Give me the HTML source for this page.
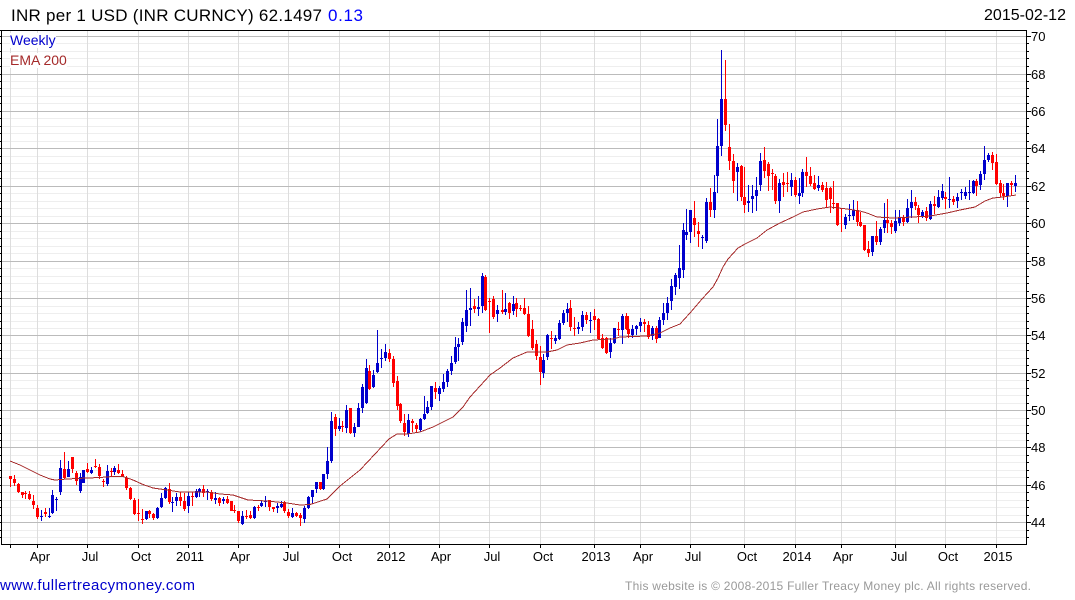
<!DOCTYPE html>
<html lang="en">
<head>
<meta charset="utf-8">
<title>INR per 1 USD</title>
<style>
html,body{margin:0;padding:0;background:#fff;width:1075px;height:600px;overflow:hidden}
svg{display:block}
text{font-family:"Liberation Sans",Arial,sans-serif}
</style>
</head>
<body>
<svg xmlns="http://www.w3.org/2000/svg" width="1075" height="600" viewBox="0 0 1075 600">
<g shape-rendering="crispEdges" fill="none">
<path stroke="#eeeeee" d="M1 43.5H1026M1 51.5H1026M1 58.5H1026M1 66.5H1026M1 81.5H1026M1 88.5H1026M1 96.5H1026M1 103.5H1026M1 118.5H1026M1 126.5H1026M1 133.5H1026M1 141.5H1026M1 156.5H1026M1 163.5H1026M1 171.5H1026M1 178.5H1026M1 193.5H1026M1 201.5H1026M1 208.5H1026M1 216.5H1026M1 231.5H1026M1 238.5H1026M1 246.5H1026M1 253.5H1026M1 268.5H1026M1 276.5H1026M1 283.5H1026M1 291.5H1026M1 306.5H1026M1 313.5H1026M1 321.5H1026M1 328.5H1026M1 343.5H1026M1 350.5H1026M1 358.5H1026M1 365.5H1026M1 380.5H1026M1 388.5H1026M1 395.5H1026M1 403.5H1026M1 418.5H1026M1 425.5H1026M1 433.5H1026M1 440.5H1026M1 455.5H1026M1 462.5H1026M1 470.5H1026M1 477.5H1026M1 492.5H1026M1 500.5H1026M1 507.5H1026M1 515.5H1026M1 530.5H1026M1 537.5H1026"/>
<path stroke="#dddddd" d="M10.5 31V544M37.5 31V544M87.5 31V544M138.5 31V544M188.5 31V544M238.5 31V544M288.5 31V544M339.5 31V544M389.5 31V544M439.5 31V544M489.5 31V544M540.5 31V544M594.5 31V544M640.5 31V544M690.5 31V544M744.5 31V544M795.5 31V544M841.5 31V544M895.5 31V544M945.5 31V544M996.5 31V544"/>
<path stroke="#bbbbbb" d="M1 36.5H1026M1 74.5H1026M1 111.5H1026M1 148.5H1026M1 186.5H1026M1 223.5H1026M1 261.5H1026M1 298.5H1026M1 335.5H1026M1 373.5H1026M1 410.5H1026M1 447.5H1026M1 485.5H1026M1 522.5H1026"/>
<rect x="10" y="33" width="46" height="15" fill="#fff"/>
<rect x="10" y="53" width="57" height="15" fill="#fff"/>

<path stroke="#ff0000" stroke-width="1" d="M10.5 476V487M14.5 475V486M18.5 483V493M22.5 492V498M25.5 491V499M29.5 491V500M33.5 495V509M37.5 505V519M45.5 508V517M64.5 452V479M72.5 457V473M76.5 471V485M87.5 463V473M95.5 459V468M99.5 464V479M103.5 479V487M111.5 468V476M118.5 464V474M122.5 470V477M126.5 476V490M130.5 487V500M134.5 498V515M138.5 499V521M142.5 509V524M149.5 510V518M153.5 513V520M169.5 483V504M180.5 492V506M184.5 493V511M192.5 492V506M203.5 485V497M211.5 490V501M219.5 497V506M227.5 496V504M231.5 501V511M234.5 505V513M238.5 511V523M246.5 510V519M250.5 511V519M258.5 505V511M269.5 500V511M273.5 507V512M284.5 501V513M288.5 509V518M296.5 512V517M300.5 513V526M320.5 482V490M335.5 414V436M342.5 421V432M350.5 408V434M369.5 365V390M389.5 349V362M393.5 356V387M397.5 376V410M400.5 403V423M404.5 414V436M412.5 419V432M416.5 423V432M435.5 382V399M474.5 299V313M485.5 275V311M489.5 298V333M493.5 296V319M502.5 290V314M509.5 302V319M516.5 298V317M520.5 305V311M524.5 298V315M528.5 306V337M532.5 320V350M536.5 340V360M540.5 346V385M551.5 331V349M570.5 300V331M574.5 317V336M586.5 312V324M594.5 309V330M598.5 318V340M602.5 334V349M606.5 337V354M618.5 322V336M626.5 313V330M628.5 316V338M644.5 319V332M648.5 321V339M656.5 326V343M694.5 201V237M698.5 222V247M710.5 188V217M725.5 60V131M729.5 124V170M733.5 154V193M741.5 165V201M744.5 167V213M764.5 147V178M768.5 162V191M772.5 169V190M775.5 174V204M783.5 173V197M787.5 172V192M795.5 177V197M806.5 157V187M810.5 167V186M814.5 175V190M822.5 182V192M826.5 182V208M830.5 187V213M833.5 181V209M837.5 203V226M841.5 208V232M857.5 201V226M860.5 212V227M864.5 225V251M868.5 241V257M876.5 221V245M887.5 199V233M891.5 220V234M903.5 215V226M915.5 197V210M918.5 205V223M926.5 207V221M934.5 196V214M945.5 192V209M953.5 196V205M976.5 179V196M992.5 152V170M996.5 154V185M1000.5 180V197M1003.5 184V200M1011.5 181V195"/>
<path stroke="#ff0000" stroke-width="3" d="M10.5 476V479M14.5 479V483M18.5 484V492M22.5 492V495M25.5 493V494M29.5 494V499M33.5 501V505M37.5 508V517M45.5 512V514M64.5 469V478M72.5 457V469M76.5 473V481M87.5 469V472M95.5 466V467M99.5 467V476M103.5 481V482M111.5 471V472M118.5 470V473M122.5 474V477M126.5 478V488M130.5 488V499M134.5 500V514M138.5 513V514M142.5 519V520M149.5 511V514M153.5 514V518M169.5 489V502M180.5 497V501M184.5 501V509M192.5 496V497M203.5 489V493M211.5 492V499M219.5 498V503M227.5 499V503M231.5 501V511M234.5 510V511M238.5 511V521M246.5 516V517M250.5 515V518M258.5 507V508M269.5 500V507M273.5 507V509M284.5 502V511M288.5 512V516M296.5 513V516M300.5 515V518M320.5 482V489M335.5 417V429M342.5 426V427M350.5 408V433M369.5 371V389M389.5 353V359M393.5 359V383M397.5 381V406M400.5 404V421M404.5 423V432M412.5 421V423M416.5 425V429M435.5 388V392M474.5 306V309M485.5 277V310M489.5 301V302M493.5 299V317M502.5 310V312M509.5 303V313M516.5 303V309M520.5 308V309M524.5 308V314M528.5 314V336M532.5 329V348M536.5 344V356M540.5 357V372M551.5 338V339M570.5 308V327M574.5 328V329M586.5 315V320M594.5 316V320M598.5 319V339M602.5 338V348M606.5 338V353M618.5 329V330M626.5 316V329M628.5 329V334M644.5 322V324M648.5 325V337M656.5 328V339M694.5 218V225M698.5 231V234M710.5 202V210M725.5 99V125M729.5 147V161M733.5 161V181M741.5 166V197M744.5 197V205M764.5 160V171M768.5 164V176M772.5 173V174M775.5 176V201M783.5 182V185M787.5 183V184M795.5 180V195M806.5 172V176M810.5 176V184M814.5 183V189M822.5 185V190M826.5 188V200M830.5 188V199M833.5 203V204M837.5 203V225M841.5 208V209M857.5 210V222M860.5 222V226M864.5 225V250M868.5 249V253M876.5 236V242M887.5 220V223M891.5 223V227M903.5 218V222M915.5 202V206M918.5 208V215M926.5 211V218M934.5 204V206M945.5 197V199M953.5 199V202M976.5 181V186M992.5 155V163M996.5 162V184M1000.5 183V193M1003.5 193V196M1011.5 183V185"/>
<path stroke="#0000cc" stroke-width="1" d="M41.5 510V521M49.5 508V518M52.5 490V514M56.5 497V511M60.5 460V495M68.5 461V477M80.5 473V493M83.5 470V483M91.5 467V474M107.5 465V486M114.5 466V475M146.5 511V520M157.5 507V519M161.5 493V508M165.5 487V499M172.5 497V512M176.5 493V506M188.5 492V513M196.5 489V498M199.5 488V497M207.5 489V500M215.5 492V504M223.5 497V504M242.5 511V525M254.5 506V519M261.5 501V507M265.5 496V507M277.5 503V513M281.5 501V508M292.5 508V518M304.5 506V523M308.5 496V509M312.5 490V503M316.5 482V493M323.5 474V490M327.5 447V479M331.5 412V463M339.5 418V431M346.5 405V433M354.5 423V437M358.5 403V427M362.5 384V413M366.5 359V404M373.5 370V388M377.5 330V373M381.5 349V368M385.5 344V361M408.5 414V437M420.5 418V432M424.5 396V420M427.5 401V414M431.5 386V410M439.5 386V401M443.5 374V392M447.5 369V387M451.5 356V375M455.5 337V364M458.5 338V361M462.5 318V345M466.5 290V332M470.5 288V326M478.5 296V316M482.5 273V313M497.5 305V322M505.5 293V315M513.5 296V315M543.5 354V378M547.5 334V360M555.5 335V344M559.5 320V340M563.5 310V325M567.5 303V322M578.5 322V334M582.5 311V331M590.5 312V333M610.5 338V358M614.5 328V344M622.5 314V344M632.5 325V338M636.5 325V335M640.5 318V332M652.5 326V340M659.5 317V338M663.5 303V325M667.5 297V320M671.5 279V310M675.5 273V295M679.5 245V289M683.5 223V278M686.5 209V240M690.5 210V243M702.5 235V249M706.5 198V243M714.5 175V218M717.5 119V193M721.5 50V156M737.5 163V201M748.5 185V212M752.5 185V213M756.5 177V211M760.5 153V191M779.5 179V213M791.5 173V196M799.5 178V204M802.5 169V197M818.5 176V191M845.5 214V229M849.5 204V221M853.5 200V220M872.5 236V256M880.5 227V245M884.5 203V233M895.5 210V233M899.5 210V226M907.5 199V223M911.5 190V218M922.5 210V218M930.5 201V220M938.5 190V208M942.5 184V200M949.5 177V208M957.5 193V208M961.5 189V200M965.5 187V199M969.5 180V200M973.5 180V194M980.5 171V190M984.5 146V180M988.5 153V162M1007.5 183V207M1015.5 175V192"/>
<path stroke="#0000cc" stroke-width="3" d="M41.5 516V517M49.5 516V517M52.5 495V513M56.5 499V500M60.5 468V492M68.5 469V477M80.5 477V491M83.5 470V483M91.5 470V473M107.5 471V484M114.5 468V472M146.5 511V519M157.5 508V518M161.5 498V507M165.5 488V498M172.5 502V503M176.5 497V501M188.5 496V506M196.5 491V497M199.5 489V492M207.5 491V492M215.5 498V500M223.5 499V501M242.5 516V524M254.5 507V518M261.5 503V506M265.5 501V502M277.5 506V508M281.5 504V507M292.5 513V517M304.5 508V519M308.5 497V508M312.5 490V497M316.5 482V489M323.5 474V489M327.5 461V474M331.5 421V461M339.5 426V429M346.5 410V428M354.5 427V433M358.5 408V427M362.5 387V408M366.5 368V403M373.5 375V387M377.5 363V372M381.5 358V359M385.5 352V358M408.5 420V434M420.5 419V430M424.5 414V419M427.5 407V413M431.5 386V407M439.5 388V394M443.5 382V389M447.5 371V382M451.5 363V371M455.5 347V362M458.5 344V347M462.5 322V342M466.5 310V326M470.5 308V310M478.5 307V309M482.5 276V306M497.5 310V314M505.5 309V312M513.5 304V311M543.5 360V373M547.5 335V357M555.5 338V341M559.5 323V339M563.5 313V323M567.5 309V313M578.5 327V329M582.5 315V327M590.5 320V321M610.5 343V352M614.5 328V343M622.5 316V330M632.5 329V335M636.5 326V329M640.5 322V326M652.5 328V336M659.5 320V338M663.5 313V320M667.5 303V313M671.5 286V301M675.5 275V287M679.5 268V278M683.5 230V270M686.5 232V235M690.5 210V232M702.5 237V238M706.5 202V241M714.5 192V210M717.5 146V176M721.5 99V146M737.5 167V172M748.5 201V203M752.5 196V199M756.5 190V196M760.5 161V185M779.5 183V201M791.5 180V187M799.5 193V196M802.5 172V193M818.5 185V188M845.5 217V225M849.5 215V216M853.5 210V216M872.5 236V252M880.5 229V242M884.5 220V228M895.5 221V231M899.5 217V223M907.5 208V222M911.5 202V208M922.5 212V216M930.5 204V219M938.5 197V207M942.5 191V198M949.5 199V200M957.5 197V201M961.5 192V193M965.5 192V196M969.5 192V193M973.5 181V193M980.5 174V185M984.5 160V174M988.5 155V160M1007.5 183V196M1015.5 183V186"/>

<polyline stroke="#a52a2a" stroke-width="1" points="10,461 20,465 30,470 40,475 50,479 55,480 67,479 87,478 100,477.5 113,476.5 123,476.5 133,480 143,484.5 153,488 167,490 180,492 207,492 220,494 233,495 248,500 267,501 287,503 300,505 310,504.5 327,499 340,486 350,478 360,470 375,454 389,439 397,434 407,434 420,432 433,427 447,420 453,417 463,407 470,397 480,386 490,375 500,368 513,358 527,352 547,352 557,350 567,345 580,343 593,340 613,339 620,337 647,336 660,333 670,328 680,324 690,313 702,299 713,287 718,278 723,267 728,259 738,248 745,244 757,238 767,230 780,223 793,217 803,212 817,209 830,207 847,209 860,211 867,213 877,217 893,218 913,217 930,216 947,213 960,210 975,207 985,201 993,198 1003,197 1016,195"/>

<path stroke="#000" d="M0 30.5H1027M1.5 30V545M1026.5 30V545M1 544.5H1027"/>
<path stroke="#000" d="M0 36.5H2M0 43.5H2M0 51.5H2M0 58.5H2M0 66.5H2M0 74.5H2M0 81.5H2M0 88.5H2M0 96.5H2M0 103.5H2M0 111.5H2M0 118.5H2M0 126.5H2M0 133.5H2M0 141.5H2M0 148.5H2M0 156.5H2M0 163.5H2M0 171.5H2M0 178.5H2M0 186.5H2M0 193.5H2M0 201.5H2M0 208.5H2M0 216.5H2M0 223.5H2M0 231.5H2M0 238.5H2M0 246.5H2M0 253.5H2M0 261.5H2M0 268.5H2M0 276.5H2M0 283.5H2M0 291.5H2M0 298.5H2M0 306.5H2M0 313.5H2M0 321.5H2M0 328.5H2M0 335.5H2M0 343.5H2M0 350.5H2M0 358.5H2M0 365.5H2M0 373.5H2M0 380.5H2M0 388.5H2M0 395.5H2M0 403.5H2M0 410.5H2M0 418.5H2M0 425.5H2M0 433.5H2M0 440.5H2M0 447.5H2M0 455.5H2M0 462.5H2M0 470.5H2M0 477.5H2M0 485.5H2M0 492.5H2M0 500.5H2M0 507.5H2M0 515.5H2M0 522.5H2M0 530.5H2M0 537.5H2"/>
<path stroke="#000" d="M1026 36.5H1031M1026 74.5H1031M1026 111.5H1031M1026 148.5H1031M1026 186.5H1031M1026 223.5H1031M1026 261.5H1031M1026 298.5H1031M1026 335.5H1031M1026 373.5H1031M1026 410.5H1031M1026 447.5H1031M1026 485.5H1031M1026 522.5H1031M1026 43.5H1029M1026 51.5H1029M1026 58.5H1029M1026 66.5H1029M1026 81.5H1029M1026 88.5H1029M1026 96.5H1029M1026 103.5H1029M1026 118.5H1029M1026 126.5H1029M1026 133.5H1029M1026 141.5H1029M1026 156.5H1029M1026 163.5H1029M1026 171.5H1029M1026 178.5H1029M1026 193.5H1029M1026 201.5H1029M1026 208.5H1029M1026 216.5H1029M1026 231.5H1029M1026 238.5H1029M1026 246.5H1029M1026 253.5H1029M1026 268.5H1029M1026 276.5H1029M1026 283.5H1029M1026 291.5H1029M1026 306.5H1029M1026 313.5H1029M1026 321.5H1029M1026 328.5H1029M1026 343.5H1029M1026 350.5H1029M1026 358.5H1029M1026 365.5H1029M1026 380.5H1029M1026 388.5H1029M1026 395.5H1029M1026 403.5H1029M1026 418.5H1029M1026 425.5H1029M1026 433.5H1029M1026 440.5H1029M1026 455.5H1029M1026 462.5H1029M1026 470.5H1029M1026 477.5H1029M1026 492.5H1029M1026 500.5H1029M1026 507.5H1029M1026 515.5H1029M1026 530.5H1029M1026 537.5H1029"/>
<path stroke="#000" d="M10.5 544V548M37.5 544V548M87.5 544V548M138.5 544V548M188.5 544V548M238.5 544V548M288.5 544V548M339.5 544V548M389.5 544V548M439.5 544V548M489.5 544V548M540.5 544V548M594.5 544V548M640.5 544V548M690.5 544V548M744.5 544V548M795.5 544V548M841.5 544V548M895.5 544V548M945.5 544V548M996.5 544V548"/>
</g>

<text x="11" y="21" font-size="17" fill="#000" textLength="311" lengthAdjust="spacing">INR per 1 USD (INR CURNCY) 62.1497</text>
<text x="328" y="21" font-size="17" fill="#0000ff" textLength="35" lengthAdjust="spacing">0.13</text>
<text x="984" y="20" font-size="16" fill="#000" textLength="82" lengthAdjust="spacing">2015-02-12</text>
<text x="10" y="45" font-size="14" fill="#0000cc">Weekly</text>
<text x="10" y="65" font-size="14" fill="#a52a2a">EMA 200</text>

<g font-size="13" fill="#000">
<text x="1031" y="41">70</text>
<text x="1031" y="79">68</text>
<text x="1031" y="116">66</text>
<text x="1031" y="153">64</text>
<text x="1031" y="191">62</text>
<text x="1031" y="228">60</text>
<text x="1031" y="266">58</text>
<text x="1031" y="303">56</text>
<text x="1031" y="340">54</text>
<text x="1031" y="378">52</text>
<text x="1031" y="415">50</text>
<text x="1031" y="452">48</text>
<text x="1031" y="490">46</text>
<text x="1031" y="527">44</text>
</g>
<g font-size="13" fill="#000" text-anchor="middle">
<text x="40" y="561">Apr</text>
<text x="90" y="561">Jul</text>
<text x="141" y="561">Oct</text>
<text x="190" y="561">2011</text>
<text x="240" y="561">Apr</text>
<text x="291" y="561">Jul</text>
<text x="342" y="561">Oct</text>
<text x="391" y="561">2012</text>
<text x="441" y="561">Apr</text>
<text x="492" y="561">Jul</text>
<text x="543" y="561">Oct</text>
<text x="596" y="561">2013</text>
<text x="643" y="561">Apr</text>
<text x="693" y="561">Jul</text>
<text x="747" y="561">Oct</text>
<text x="797" y="561">2014</text>
<text x="843" y="561">Apr</text>
<text x="899" y="561">Jul</text>
<text x="948" y="561">Oct</text>
<text x="998" y="561">2015</text>
</g>
<text x="0" y="590" font-size="15" fill="#0000cc" textLength="195" lengthAdjust="spacing">www.fullertreacymoney.com</text>
<text x="625" y="590" font-size="12" fill="#999999" textLength="406" lengthAdjust="spacing">This website is © 2008-2015 Fuller Treacy Money plc. All rights reserved.</text>
</svg>
</body>
</html>
